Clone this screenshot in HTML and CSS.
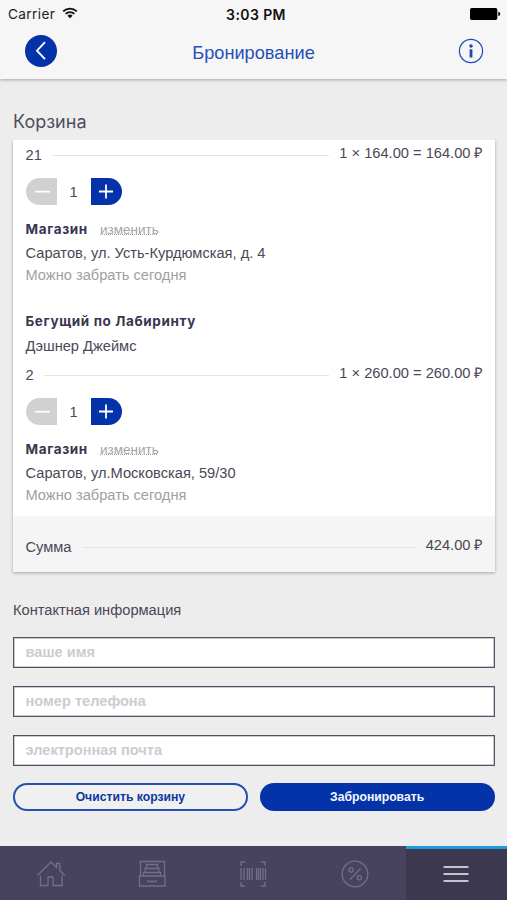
FILE: index.html
```html
<!DOCTYPE html>
<html lang="ru">
<head>
<meta charset="utf-8">
<title>Бронирование</title>
<link rel="stylesheet" href="styles.css">
</head>
<body>
<div class="app">
  <header class="header">
    <div class="status">
      <span class="carrier">Carrier</span>
      <svg class="wifi" width="16" height="12" viewBox="0 0 16 12"><path d="M1.2 4.4a9.7 9.7 0 0 1 13.6 0M3.6 6.9a6.3 6.3 0 0 1 8.8 0" fill="none" stroke="#111" stroke-width="1.8"/><path d="M8 11.2 5.4 8.7a3.7 3.7 0 0 1 5.2 0z" fill="#111"/></svg>
      <span class="time">3:03 PM</span>
      <svg class="battery" width="31" height="12" viewBox="0 0 31 12"><rect width="27.3" height="12" rx="1.8"/><path d="M28.3 3.8q2 .6 2 2.2t-2 2.2z"/></svg>
    </div>
    <div class="navbar">
      <button class="back" aria-label="Назад"><svg width="32" height="32" viewBox="0 0 32 32"><path d="M20 7.2 12 15.7l8 8.4" fill="none" stroke="#fff" stroke-width="1.9"/></svg></button>
      <h1 class="title">Бронирование</h1>
      <svg class="info" width="26" height="26" viewBox="0 0 26 26" fill="none" stroke="#1d49b3"><circle cx="13" cy="13" r="11.6" stroke-width="1.2"/><circle cx="13" cy="8" r="1.8" fill="#1d49b3" stroke="none"/><path d="M13 11.3v8.2" stroke-width="2.8"/></svg>
    </div>
  </header>

  <main class="content">
    <h2 class="heading">Корзина</h2>
    <section class="card">
      <article class="item">
        <div class="line"><span>21</span><i class="leader"></i><span class="price">1 × 164.00 = 164.00 ₽</span></div>
        <div class="stepper">
          <button class="minus"><svg width="31" height="27" viewBox="0 0 31 27"><path d="M9 13.7h15" stroke="#fff" stroke-width="1.7"/></svg></button>
          <span class="count">1</span>
          <button class="plus"><svg width="31" height="27" viewBox="0 0 31 27"><path d="M8 13.5h14M15 6.5v14" stroke="#fff" stroke-width="1.8"/></svg></button>
        </div>
        <div class="shop"><b class="strong shop-label">Магазин</b><a class="change">изменить</a></div>
        <p class="address">Саратов, ул. Усть-Курдюмская, д. 4</p>
        <p class="note">Можно забрать сегодня</p>
      </article>
      <article class="item item-titled">
        <h3 class="strong book">Бегущий по Лабиринту</h3>
        <p class="author">Дэшнер Джеймс</p>
        <div class="line"><span>2</span><i class="leader"></i><span class="price">1 × 260.00 = 260.00 ₽</span></div>
        <div class="stepper">
          <button class="minus"><svg width="31" height="27" viewBox="0 0 31 27"><path d="M9 13.7h15" stroke="#fff" stroke-width="1.7"/></svg></button>
          <span class="count">1</span>
          <button class="plus"><svg width="31" height="27" viewBox="0 0 31 27"><path d="M8 13.5h14M15 6.5v14" stroke="#fff" stroke-width="1.8"/></svg></button>
        </div>
        <div class="shop"><b class="strong shop-label">Магазин</b><a class="change">изменить</a></div>
        <p class="address">Саратов, ул.Московская, 59/30</p>
        <p class="note">Можно забрать сегодня</p>
      </article>
      <div class="total"><div class="line"><span>Сумма</span><i class="leader"></i><span class="price">424.00 ₽</span></div></div>
    </section>

    <form class="form">
      <h2 class="form-title">Контактная информация</h2>
      <input class="field" placeholder="ваше имя">
      <input class="field" placeholder="номер телефона">
      <input class="field" placeholder="электронная почта">
      <div class="actions">
        <button type="button" class="btn btn-outline">Очистить корзину</button>
        <button type="button" class="btn btn-primary">Забронировать</button>
      </div>
    </form>
  </main>

  <nav class="tabs">
    <a class="tab"><svg width="30" height="28" viewBox="0 0 30 28"><path d="M1.5 15.5 15 2l5.5 5.5V3.5h3.3V10.5l5 5M4.5 15.5V25.500h7.500v-8.500h5v8.500h9v-10" /></svg></a>
    <a class="tab"><svg width="28" height="28" viewBox="0 0 28 28"><path d="M2.500 16V1.500h24v14.500M1.500 16h25.500v10H1.500zM10 20v1.500h8V20M5.500 15.500v-3h17v3M7 12.500V8.500h14v4M8.500 8.500V4.500h11v4" /></svg></a>
    <a class="tab"><svg width="28" height="28" viewBox="0 0 28 28"><path d="M2 6V2h4M22 2h4v4M26 22v4h-4M6 26H2v-4M2 8v12M5 8v12M8.500 8v12M10.500 8v12M13 8v12M17.500 8v12M19.500 8v12M21.500 8v12M24 8v12M26.500 8v12"/></svg></a>
    <a class="tab"><svg width="28" height="28" viewBox="0 0 28 28"><circle cx="14" cy="14" r="12.800"/><path d="M19.500 8.500 9 19.500"/><circle cx="10" cy="10" r="2.100"/><circle cx="18.300" cy="17.800" r="2.100"/></svg></a>
    <a class="tab tab-active"><svg width="26" height="20" viewBox="0 0 26 20"><path d="M.5 3h25M.5 10h25M.5 17h25"/></svg></a>
  </nav>
</div>
</body>
</html>
```
FILE: styles.css
```css
* { box-sizing: border-box; }
body { margin: 0; background: #ededed; color: #4b4856; font-family: "Liberation Sans", sans-serif; font-size: 14.65px; }
h1, h2, h3, p { margin: 0; font-weight: 400; }
button { border: 0; padding: 0; font-family: inherit; }
svg { display: block; }
.app { width: 507px; height: 900px; display: flex; flex-direction: column; overflow: hidden; }

.header { flex: none; height: 79px; background: #f6f6f6; box-shadow: 0 1px 3px rgba(0, 0, 0, .3); }
.status { display: flex; align-items: center; height: 28px; padding: 0 6px 0 8px; font-family: Inter, sans-serif; font-size: 13.6px; color: #222; }
.carrier { width: 54px; letter-spacing: .4px; }
.wifi { margin-bottom: 3px; }
.time { width: 62px; margin-left: 147px; color: #111; font-weight: 600; font-size: 14px; white-space: nowrap; text-align: center; letter-spacing: .4px; }
.battery { margin-left: auto; }
.navbar { display: flex; align-items: center; justify-content: space-between; height: 46px; padding: 0 23px 0 25px; }
.back { width: 32px; height: 32px; border-radius: 50%; background: #0433a9; }
.title { font-size: 18.2px; color: #2550b8; padding: 5px 8px 0 0; }

.content { flex: 1; padding: 29px 12.5px 0 13px; }
.heading { height: 32px; line-height: 28px; font-family: Inter, sans-serif; font-size: 18px; color: #504d5d; }
.card { background: #fff; box-shadow: 0 1px 3px rgba(0, 0, 0, .3); clip-path: inset(0 -4px -5px -4px); }
.item { height: 156px; padding: 5px 12px 0 12.5px; }
.item-titled { height: 220px; padding-top: 15px; }
.line { display: flex; align-items: center; height: 20px; }
.leader { flex: 1; margin: 1px 10px 0; border-top: 1px solid #e4e4e7; }
.price { margin: -7px -1px 0 0; white-space: pre; }
.stepper { display: flex; align-items: center; height: 27px; margin-top: 13px; }
.minus, .plus { width: 31px; height: 27px; }
.minus { background: #d1d1d1; border-radius: 14px 0 0 14px; }
.plus { background: #0433a9; border-radius: 0 14px 14px 0; }
.count { width: 34px; text-align: center; }
.strong { font-family: Inter, sans-serif; font-weight: 700; font-size: 13.5px; letter-spacing: .62px; color: #39354f; }
.shop { display: flex; height: 24px; line-height: 20px; margin-top: 14px; }
.shop-label { width: 74.5px; }
.change { color: #a3a3a8; font-size: 13.5px; line-height: 22px; text-decoration: underline dotted 1px; text-underline-offset: 0; text-decoration-skip-ink: none; }
.address { height: 22px; line-height: 21px; white-space: nowrap; }
.note { height: 20px; line-height: 20px; color: #a0a0a4; }
.book { height: 24px; line-height: 20px; }
.author { height: 30px; line-height: 23px; }
.total { height: 56px; padding: 21px 12px 0 12.5px; background: #f5f5f5; }

.form { display: flex; flex-direction: column; margin-top: 28px; }
.form-title { height: 37px; line-height: 21px; font-size: 14.65px; }
.field { width: 100%; height: 31px; margin: 0 0 18px; padding: 0 11.5px 2px; border: 1px solid #555164; box-shadow: inset 0 0 0 .5px #9a97a4; border-radius: 0; background: #fff; font: 700 14.6px "Liberation Sans", sans-serif; }
.field::placeholder { color: #ccccd0; opacity: 1; }
.actions { display: grid; grid-template-columns: 1fr 1fr; gap: 12px; margin-top: -1px; }
.btn { height: 28px; border-radius: 14px; font-size: 12.2px; font-weight: 700; }
.btn-outline { border: 2px solid #2450b0; background: #f0f0f0; color: #0c36a0; }
.btn-primary { background: #0433a9; color: #f3f6ff; }

.tabs { flex: none; display: grid; grid-template-columns: repeat(5, 1fr); height: 54px; background: #47435e; }
.tab { display: flex; align-items: center; justify-content: center; padding-top: 1px; }
.tab svg { fill: none; stroke: #736f87; stroke-width: 1.3; }
.tab-active { background: #3c3850; border-top: 3px solid #1c9ce0; padding-top: 0; padding-bottom: 2px; }
.tab-active svg { stroke: #c4c1d0; stroke-width: 1.9; }
```
